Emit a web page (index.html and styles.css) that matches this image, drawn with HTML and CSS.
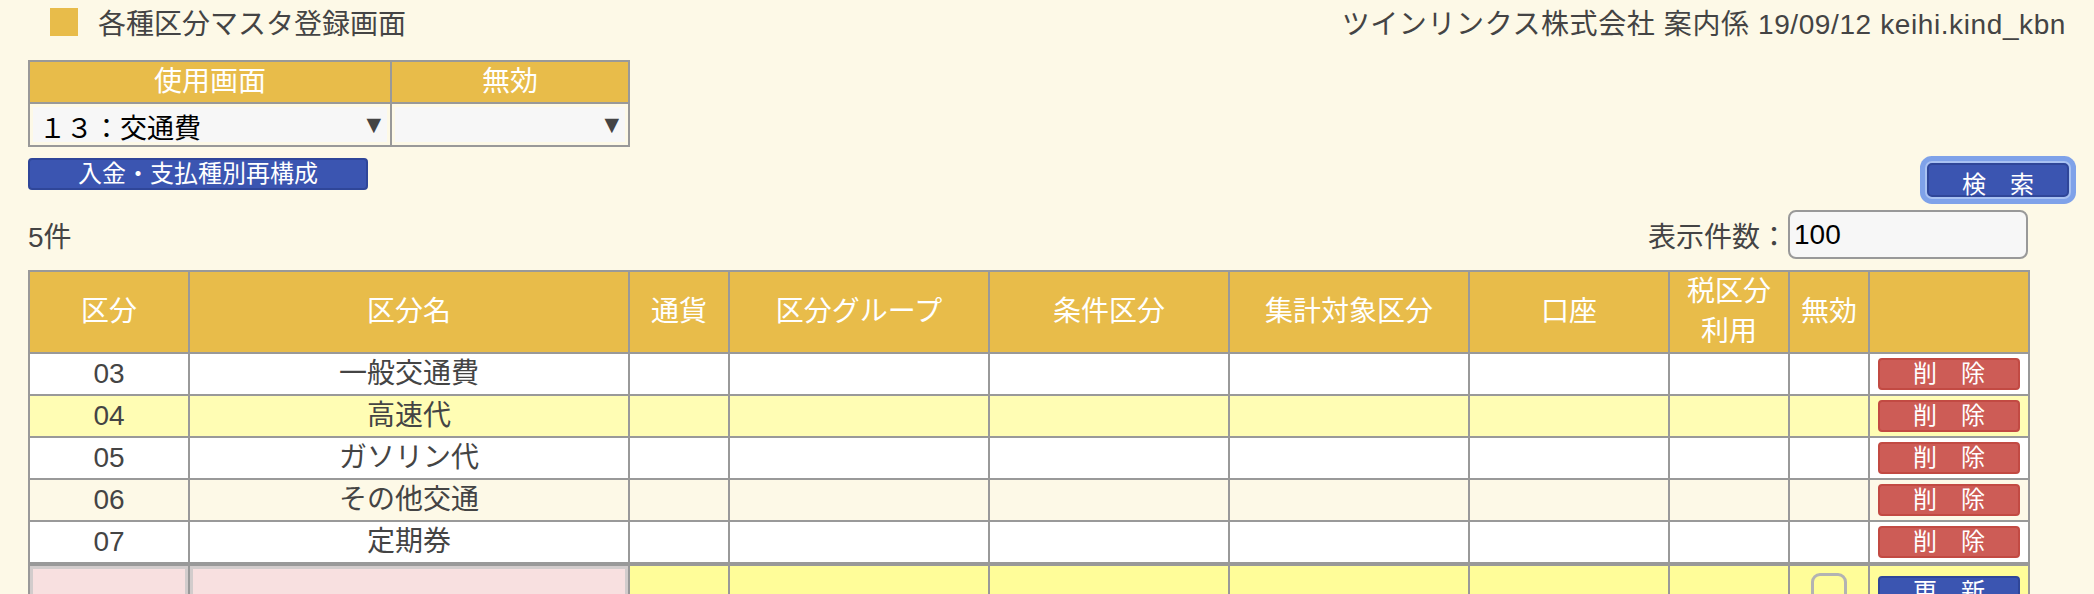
FILE: index.html
```html
<!DOCTYPE html>
<html lang="ja">
<head>
    <meta charset="UTF-8">
    <title>各種区分マスタ登録画面</title>
    <link rel="stylesheet" href="styles.css">
</head>
<body>
    <div class="top-bar">
        <h1 class="page-title"><span class="title-mark"></span>各種区分マスタ登録画面</h1>
        <div class="user-info">ツインリンクス株式会社 案内係 19/09/12 keihi.kind_kbn</div>
    </div>

    <!-- 検索条件 -->
    <table class="filter">
        <tr>
            <th class="col-screen">使用画面</th>
            <th class="col-invalid">無効</th>
        </tr>
        <tr>
            <td>
                <span class="select-wrap">
                    <select>
                        <option>１３：交通費</option>
                    </select>
                </span>
            </td>
            <td>
                <span class="select-wrap">
                    <select>
                        <option></option>
                    </select>
                </span>
            </td>
        </tr>
    </table>

    <div class="action-row">
        <button class="btn btn-blue btn-rebuild">入金・支払種別再構成</button>
        <button class="btn btn-blue btn-search">検　索</button>
    </div>

    <div class="count-row">
        <span class="count">5件</span>
        <label class="per-page">表示件数：<input type="text" value="100"></label>
    </div>

    <!-- 一覧 -->
    <table class="list">
        <colgroup>
            <col style="width: 160px">
            <col style="width: 440px">
            <col style="width: 100px">
            <col style="width: 260px">
            <col style="width: 240px">
            <col style="width: 240px">
            <col style="width: 200px">
            <col style="width: 120px">
            <col style="width: 80px">
            <col style="width: 160px">
        </colgroup>
        <thead>
            <tr>
                <th>区分</th>
                <th>区分名</th>
                <th>通貨</th>
                <th>区分グループ</th>
                <th>条件区分</th>
                <th>集計対象区分</th>
                <th>口座</th>
                <th>税区分<br>利用</th>
                <th>無効</th>
                <th></th>
            </tr>
        </thead>
        <tbody>
            <tr>
                <td>03</td><td>一般交通費</td><td></td><td></td><td></td><td></td><td></td><td></td><td></td>
                <td class="action"><button class="btn btn-red">削　除</button></td>
            </tr>
            <tr class="hover">
                <td>04</td><td>高速代</td><td></td><td></td><td></td><td></td><td></td><td></td><td></td>
                <td class="action"><button class="btn btn-red">削　除</button></td>
            </tr>
            <tr>
                <td>05</td><td>ガソリン代</td><td></td><td></td><td></td><td></td><td></td><td></td><td></td>
                <td class="action"><button class="btn btn-red">削　除</button></td>
            </tr>
            <tr class="even">
                <td>06</td><td>その他交通</td><td></td><td></td><td></td><td></td><td></td><td></td><td></td>
                <td class="action"><button class="btn btn-red">削　除</button></td>
            </tr>
            <tr>
                <td>07</td><td>定期券</td><td></td><td></td><td></td><td></td><td></td><td></td><td></td>
                <td class="action"><button class="btn btn-red">削　除</button></td>
            </tr>
        </tbody>
        <tfoot>
            <tr class="new-row">
                <td class="input-cell"><input type="text"></td>
                <td class="input-cell"><input type="text"></td>
                <td></td><td></td><td></td><td></td><td></td><td></td>
                <td><input type="checkbox" class="check"></td>
                <td class="action"><button class="btn btn-blue btn-update">更　新</button></td>
            </tr>
        </tfoot>
    </table>
</body>
</html>
```

FILE: styles.css
```css
body {
    margin: 0;
    padding: 0 28px;
    background-color: #fdf9e7;
    color: #444;
    font-family: "Liberation Sans", "Noto Sans CJK JP", sans-serif;
    font-size: 28px;
}

.top-bar {
    display: flex;
    justify-content: space-between;
    align-items: center;
    height: 44px;
}

.page-title {
    display: flex;
    align-items: center;
    margin: 0;
    font-size: 28px;
    font-weight: normal;
    color: #444;
}

.title-mark {
    width: 28px;
    height: 28px;
    margin: 0 20px 0 22px;
    background-color: #e8bc4a;
}

.user-info {
    color: #444;
    letter-spacing: 0.6px;
}

/* 検索条件 */
.filter {
    margin-top: 16px;
    border-collapse: collapse;
    border: 2px solid #999;
    width: 602px;
    table-layout: fixed;
}

.filter th,
.filter td {
    border: 2px solid #999;
    padding: 0;
}

.filter th {
    background-color: #e8bc4a;
    color: #fff;
    font-weight: normal;
    line-height: 40px;
}

.filter .col-screen {
    width: 360px;
}

.filter td {
    padding: 3px;
    background-color: #fdf9e7;
}

.select-wrap {
    position: relative;
    display: block;
}

.select-wrap select {
    appearance: none;
    display: block;
    width: 100%;
    height: 35px;
    border: none;
    background-color: #f7f7f7;
    padding: 0 0 0 6px;
    font-family: "Noto Sans CJK JP", sans-serif;
    font-size: 27px;
    color: #000;
}

.select-wrap::after {
    content: "▼";
    position: absolute;
    right: 6px;
    top: 0;
    font-family: "DejaVu Sans", sans-serif;
    font-size: 19px;
    line-height: 35px;
    color: #444;
    pointer-events: none;
}

/* ボタン */
.btn {
    font-family: "Liberation Sans", "Noto Sans CJK JP", sans-serif;
    font-size: 24px;
    color: #fff;
    cursor: pointer;
    padding: 0;
    border-radius: 4px;
}

.btn-blue {
    background-color: #3b55b1;
    border: 2px solid #2f4699;
}

.btn-red {
    background-color: #cd5c56;
    border: 2px solid #c24a43;
}

.action-row {
    display: flex;
    justify-content: space-between;
    align-items: flex-start;
}

.btn-rebuild {
    margin-top: 11px;
    width: 340px;
    height: 32px;
    line-height: 26px;
}

.btn-search {
    margin-top: 16px;
    margin-right: -3px;
    width: 142px;
    height: 34px;
    border-radius: 5px;
    box-shadow: 0 0 0 2px #a9c2f2, 0 0 0 7px #7fa2e9;
}

.count-row {
    display: flex;
    justify-content: space-between;
    align-items: center;
    width: 2000px;
    margin-top: 13px;
}

.per-page {
    display: flex;
    align-items: center;
}

.per-page input {
    width: 240px;
    height: 49px;
    box-sizing: border-box;
    border: 2px solid #999;
    border-radius: 8px;
    background-color: #f7f7f7;
    padding: 0 4px;
    font-family: "Liberation Sans", sans-serif;
    font-size: 28px;
    color: #000;
}

/* 一覧 */
.list {
    margin-top: 11px;
    width: 2000px;
    border-collapse: collapse;
    table-layout: fixed;
    border: 2px solid #999;
}

.list th,
.list td {
    border: 2px solid #999;
    padding: 0;
    text-align: center;
    line-height: 40px;
}

.list th {
    background-color: #e8bc4a;
    color: #fff;
    font-weight: normal;
}

.list td {
    background-color: #fff;
    color: #444;
}

.list tr.hover td {
    background-color: #fffdb4;
}

.list tr.even td {
    background-color: #fdf9e7;
}

.list td.action {
    padding: 0 8px;
}

.list td.action .btn {
    display: block;
    width: 100%;
    height: 32px;
    margin: 4px 0;
    line-height: 26px;
}

.list .new-row td {
    border-top: 4px solid #999;
    background-color: #fffd99;
    vertical-align: top;
}

.list .new-row td.input-cell {
    padding: 0;
}

.list .new-row td.input-cell input {
    display: block;
    width: 100%;
    height: 56px;
    box-sizing: border-box;
    border: 3px solid #d2cccc;
    background-color: #f8e0e0;
}

.check {
    appearance: none;
    width: 36px;
    height: 36px;
    margin: 7px 0 0;
    border: 3px solid #b3b3b3;
    border-radius: 9px;
    background-color: transparent;
}

.list td.action .btn-update {
    margin-top: 10px;
}
```
